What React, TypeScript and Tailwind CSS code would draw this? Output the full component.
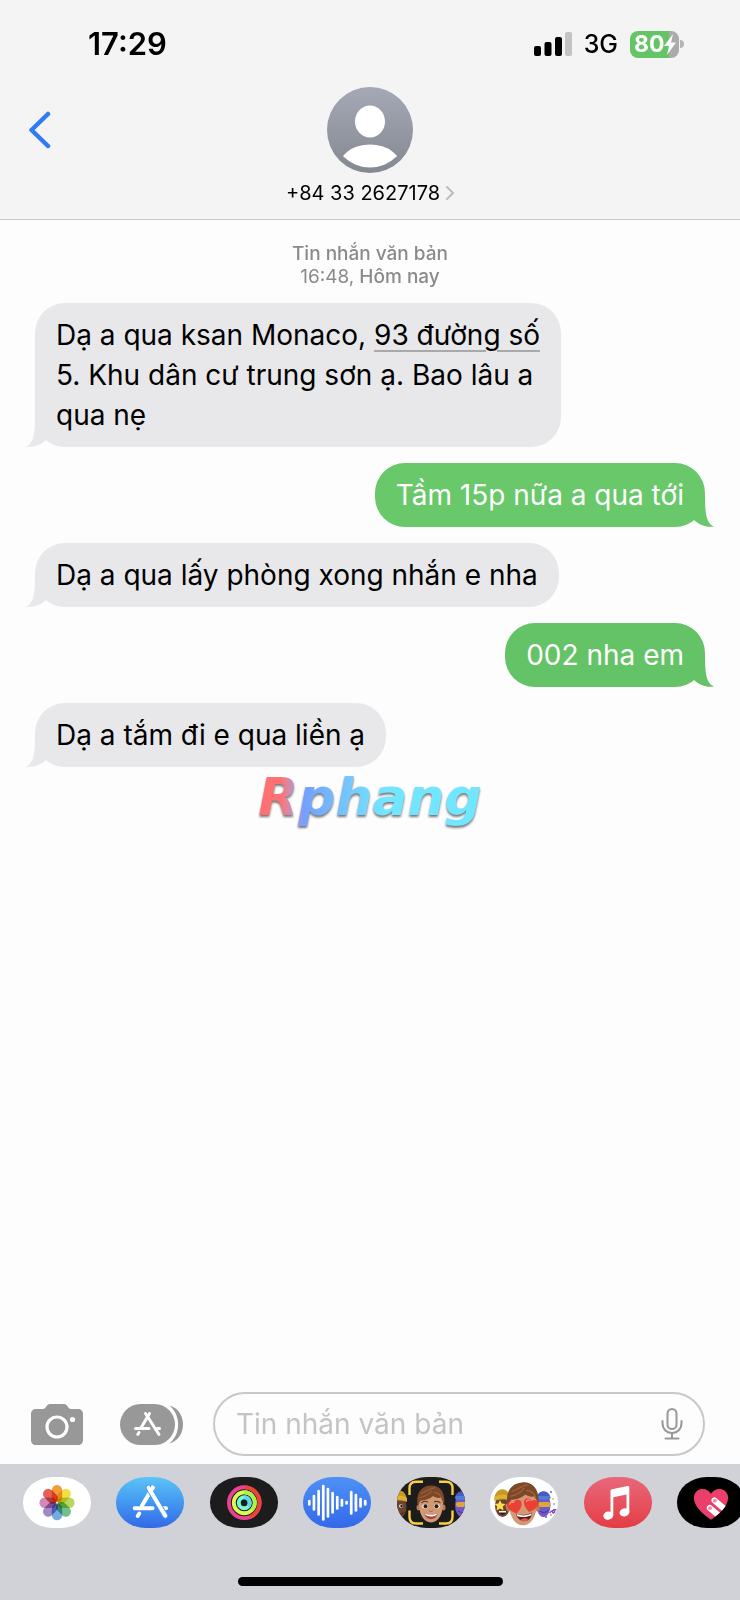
import { useState } from "react";
import type { ReactNode } from "react";

type Message = {
  id: number;
  mine: boolean;
  body: ReactNode;
  color?: string;
};

const messages: Message[] = [
  {
    id: 1,
    mine: false,
    body: (
      <>
        Dạ a qua ksan Monaco,{" "}
        <a
          href="#map"
          className="underline decoration-[#a9a9ab] decoration-2 underline-offset-[5px]"
        >
          93 đường số
        </a>
        <br />
        5. Khu dân cư trung sơn ạ. Bao lâu a
        <br />
        qua nẹ
      </>
    ),
  },
  { id: 2, mine: true, body: "Tầm 15p nữa a qua tới", color: "text-[#68c86a]" },
  { id: 3, mine: false, body: "Dạ a qua lấy phòng xong nhắn e nha" },
  { id: 4, mine: true, body: "002 nha em", color: "text-[#64c366]" },
  { id: 5, mine: false, body: "Dạ a tắm đi e qua liền ạ" },
];

const petals = [
  "#f0982f",
  "#f3dc3c",
  "#b5d555",
  "#6cbd86",
  "#6ea8dc",
  "#9a83c4",
  "#cc84b4",
  "#e35a4c",
];

const waves = [3, 8, 13, 18, 15, 11, 7, 4, 2, 12, 9, 5, 3];

const heart =
  "M0 -6 C-2 -9.500 -8 -10.500 -10.200 -5.500 C-12 0 -6 6 0 10 C6 6 12 0 10.200 -5.500 C8 -10.500 2 -9.500 0 -6Z";

const Tail = ({ mine }: { mine: boolean }) => (
  <svg
    className={`absolute bottom-0 h-8 w-5 ${
      mine ? "-right-[9px] -scale-x-100" : "-left-[9px]"
    }`}
    viewBox="0 0 20 32"
    aria-hidden="true"
  >
    <path
      d="M9 0C9 18 8 28 0 31.500C8 33 16 29 20 25V0Z"
      fill="currentColor"
    />
  </svg>
);

const Bubble = ({ message }: { message: Message }) => {
  const { mine, body, color } = message;

  return (
    <li
      className={`relative max-w-[84%] ${
        mine ? `self-end ${color}` : "self-start text-[#e8e8ea]"
      }`}
    >
      <Tail mine={mine} />
      <div className="relative rounded-[30px] bg-current px-[21px] py-3">
        <p
          className={`text-[28px] leading-[40px] ${
            mine ? "text-white" : "text-black"
          }`}
        >
          {body}
        </p>
      </div>
    </li>
  );
};

const StatusBar = () => (
  <div className="flex h-10 items-center justify-between pr-14 pl-[88px]">
    <time className="text-[31px] leading-10 font-semibold">17:29</time>
    <div className="flex items-center gap-3">
      <svg className="h-6 w-[38px]" viewBox="0 0 38 24" aria-label="Signal">
        <rect x="0" y="14" width="7" height="10" rx="2" />
        <rect x="10.500" y="10" width="7" height="14" rx="2" />
        <rect x="21" y="5" width="7" height="19" rx="2" />
        <rect x="31" y="0" width="7" height="24" rx="2" fill="#c3c3c3" />
      </svg>
      <span className="text-[25px] leading-10 font-medium">3G</span>
      <div className="flex items-center gap-px">
        <div className="flex h-[27px] w-[49px] items-center rounded-lg bg-linear-to-r from-[#64c466] from-80% to-[#ababab] to-80% pl-1">
          <span className="text-[23px] leading-[27px] font-bold text-white">
            80
          </span>
          <svg className="h-[21px] w-3" viewBox="0 0 12 21" aria-hidden="true">
            <path d="M9 0L0 12H5L3 21L12 8.500H7Z" fill="#fff" />
          </svg>
        </div>
        <span className="h-2 w-1 rounded-r-full bg-[#b4b4b4]" />
      </div>
    </div>
  </div>
);

const Avatar = () => (
  <svg className="size-[86px]" viewBox="0 0 86 86" aria-hidden="true">
    <defs>
      <linearGradient id="avatar" x1="0" y1="0" x2="0" y2="1">
        <stop offset="0" stopColor="#a5a9b6" />
        <stop offset="1" stopColor="#848891" />
      </linearGradient>
      <clipPath id="avatarInner">
        <circle cx="43" cy="43" r="37.500" />
      </clipPath>
    </defs>
    <circle cx="43" cy="43" r="43" fill="url(#avatar)" />
    <ellipse cx="43" cy="34.500" rx="15" ry="16" fill="#fff" />
    <ellipse
      cx="43"
      cy="82"
      rx="32"
      ry="24.500"
      fill="#fff"
      clipPath="url(#avatarInner)"
    />
  </svg>
);

const Header = () => (
  <header className="border-b border-[#c9c9c9] bg-[#f4f4f4] pt-6 pb-[14px]">
    <StatusBar />
    <div className="mt-[23px] grid grid-cols-[1fr_auto_1fr] items-start">
      <button
        type="button"
        aria-label="Back"
        className="flex h-[86px] items-center pl-7"
      >
        <svg
          className="h-[38px] w-6"
          viewBox="0 0 24 38"
          fill="none"
          stroke="#2f7bf6"
          strokeWidth="4.500"
          strokeLinecap="round"
          strokeLinejoin="round"
        >
          <path d="M20 3L3.500 19L20 35" />
        </svg>
      </button>
      <button type="button" className="flex flex-col items-center gap-2">
        <Avatar />
        <span className="flex items-center gap-[6px] text-[20px] leading-6">
          +84 33 2627178
          <svg
            className="h-[14px] w-2"
            viewBox="0 0 8 14"
            fill="none"
            stroke="#bdbdbf"
            strokeWidth="2"
            strokeLinecap="round"
          >
            <path d="M1 1L7 7L1 13" />
          </svg>
        </span>
      </button>
    </div>
  </header>
);

const CameraIcon = () => (
  <svg className="h-[41px] w-[52px]" viewBox="0 0 52 41" aria-hidden="true">
    <path
      d="M5 5H12C15 5 15.500 0 19 0H33C36.500 0 37 5 40 5H47C50 5 52 7 52 10V36C52 39 50 41 47 41H5C2 41 0 39 0 36V10C0 7 2 5 5 5Z"
      fill="#989898"
    />
    <circle
      cx="26"
      cy="23"
      r="10"
      fill="none"
      stroke="#fff"
      strokeWidth="3.200"
    />
    <circle cx="41.500" cy="15.500" r="2.600" fill="#fff" />
  </svg>
);

const AppsIcon = () => (
  <svg className="h-[41px] w-[64px]" viewBox="0 0 64 41" aria-hidden="true">
    <rect width="55" height="41" rx="20.500" fill="#989898" />
    <path
      d="M49.500 1.500C67 6 68 34 49.500 39.500C61 30 61 11 49.500 1.500Z"
      fill="#989898"
    />
    <g stroke="#fff" strokeWidth="3" strokeLinecap="round">
      <path d="M29.500 9.500L21.500 23" />
      <path d="M25.500 9.500L39 30.500" />
      <path d="M15.500 24.500H29M37 24.500H39.500" />
      <path d="M19 28.500L17.800 30.300" />
    </g>
  </svg>
);

const MicIcon = () => (
  <svg
    className="h-8 w-[22px]"
    viewBox="0 0 22 32"
    fill="none"
    stroke="#989898"
    strokeWidth="2"
    strokeLinecap="round"
    aria-hidden="true"
  >
    <rect x="6.500" y="1" width="9" height="20" rx="4.500" />
    <path d="M1.500 13V15C1.500 21 5.500 25 11 25C16.500 25 20.500 21 20.500 15V13" />
    <path d="M11 25V30.500M4.500 30.500H17.500" />
  </svg>
);

const PhotosArt = () => (
  <g transform="translate(34 25.700)">
    {petals.map((fill, i) => (
      <rect
        key={fill}
        x="-5.200"
        y="-17.600"
        width="10.400"
        height="16.800"
        rx="5.200"
        fill={fill}
        fillOpacity="0.95"
        transform={`rotate(${i * 45})`}
        className="mix-blend-multiply"
      />
    ))}
  </g>
);

const StoreArt = () => (
  <g stroke="#fff" strokeWidth="4" strokeLinecap="round">
    <path d="M36.700 10.700L26 28.500" />
    <path d="M18.700 31.200H36.500M46 31.200H50" />
    <path d="M23.300 36.500L21.700 39" />
    <path d="M32.500 10.700L49.300 38.700" stroke="#459bf0" strokeWidth="6" />
    <path d="M36.700 10.700L34.500 14.500" />
    <path d="M32.500 10.700L49.300 38.700" />
  </g>
);

const FitnessArt = () => (
  <g fill="none" strokeWidth="3.900">
    <circle cx="34.300" cy="25.700" r="15.400" stroke="#ea4292" />
    <path d="M35.500 10.400A15.400 15.400 0 0 1 40 40" stroke="#eb4334" />
    <circle cx="34.300" cy="25.700" r="10.500" stroke="#d9fb4f" />
    <path d="M34.300 15.200A10.500 10.500 0 0 1 42 32.800" stroke="#a8f449" />
    <circle cx="34.300" cy="25.700" r="5.500" stroke="#75f7d6" />
    <path d="M34.300 20.200A5.500 5.500 0 0 1 38 29.500" stroke="#5fd5f2" />
  </g>
);

const VoiceArt = () => (
  <g stroke="#fff" strokeWidth="2.700" strokeLinecap="round">
    {waves.map((h, i) => (
      <path
        key={i}
        d={`M${6.300 + i * 4.660} ${27 - h}V${24.400 + h}`}
      />
    ))}
  </g>
);

const BeanieFace = ({ star }: { star?: boolean }) => (
  <g>
    <ellipse cx="0" cy="5" rx="7.500" ry="11" fill="#6d4430" />
    <path d="M-8 0C-9 -15 8 -16 8 0C4 -2 -4 -2 -8 0Z" fill="#c79a22" />
    <path d="M-8 0C-4 -3 4 -3 8 0V-4C4 -7 -4 -7 -8 -4Z" fill="#dcb033" />
    {star ? (
      <>
        <path
          d="M-2.500 -1L-0.800 2.500L3 3L0.300 5.600L1 9.500L-2.500 7.600L-6 9.500L-5.300 5.600L-8 3L-4.200 2.500Z"
          fill="#fbdc4a"
        />
        <path d="M6 0L7 3L9 4L7 6L6 9L3 5Z" fill="#e8b93a" />
        <path d="M-4 10H4C3 15 -3 15 -4 10Z" fill="#361915" />
        <path d="M-3.500 10H3.500V11.500H-3.500Z" fill="#fff" />
      </>
    ) : (
      <>
        <ellipse cx="2" cy="4" rx="2" ry="1.700" fill="#e9e2dc" />
        <circle cx="2.500" cy="4" r="1.200" fill="#21130c" />
        <path d="M-2 11C1 13 4 12 5 10" stroke="#3a1e14" fill="none" />
      </>
    )}
  </g>
);

const PurpleFace = () => (
  <g>
    <ellipse cx="0" cy="2" rx="7" ry="12" fill="#7257c9" />
    <path d="M-7 -5C-6 -14 6 -14 7 -5Z" fill="#4a5bc0" />
    <rect x="-7" y="-7" width="14" height="3.500" rx="1.700" fill="#4c80d8" />
    <rect x="-6" y="-1" width="13" height="5" rx="2" fill="#dba63c" />
    <path d="M-4 8C-1 10 3 10 5 7" stroke="#45309b" fill="none" />
  </g>
);

const BoyFace = ({ inLove }: { inLove?: boolean }) => (
  <g>
    <ellipse cx="-12.500" cy="4" rx="2" ry="3" fill="#b97a58" />
    <ellipse cx="12.500" cy="4" rx="2" ry="3" fill="#b97a58" />
    <path
      d="M-12 -2C-12 -12 12 -12 12 -2C12.500 9 8 19 0 19C-8 19 -12.500 9 -12 -2Z"
      fill="#d19a74"
    />
    <path
      d="M-13.500 3C-15 -8 -12 -17 -1 -18C9 -19 15 -11 13 2C12 0 12 -3 10 -6C7 -5 4 -6 2 -7.500C-2 -4 -7 -3 -10 -3C-12 -1 -12 1 -13.500 3Z"
      fill="#7d4828"
    />
    <path
      d="M-11 -6C-6 -7 -1 -10 1 -13M-10 -10C-5 -12 -1 -15 4 -16M3 -11C7 -11 10 -8 11 -4"
      stroke="#9c6138"
      strokeWidth="1.200"
      fill="none"
    />
    {inLove ? (
      <>
        <path
          d="M-6 9C-2 10.500 4 10.500 7.500 8C8 17 -4 18 -6 9Z"
          fill="#5c1a1a"
        />
        <path
          d="M-5.500 9.300C-2 11 4 10.800 7.200 8.600V10.300C4 12 -2 12.300 -5 11Z"
          fill="#fff"
        />
        <path
          d="M-2.500 14.500C0 12.500 3 12.500 4.500 14C2 16.200 -1 16.200 -2.500 14.500Z"
          fill="#dc5953"
        />
        <path
          d={heart}
          fill="#ec4034"
          transform="translate(-6.900 3) rotate(-14) scale(.6)"
        />
        <path
          d={heart}
          fill="#ec4034"
          transform="translate(6.600 1.700) rotate(14) scale(.6)"
        />
        <path
          d="M-11.500 1C-11 -1 -9.500 -1.500 -8.500 -0.800M3 -1.500C3.500 -3 5 -3.500 6 -2.500"
          stroke="#ff9185"
          strokeWidth="1.100"
          strokeLinecap="round"
          fill="none"
        />
      </>
    ) : (
      <>
        <path
          d="M-9.500 -0.500C-7.500 -2.500 -5 -2.500 -3 -1.500M3 -1.500C5 -2.500 7.500 -2.500 9.500 -0.500"
          stroke="#5b3019"
          strokeWidth="1.100"
          fill="none"
        />
        <ellipse cx="-5.800" cy="2.800" rx="2.900" ry="2.100" fill="#fff" />
        <ellipse cx="5.800" cy="2.800" rx="2.900" ry="2.100" fill="#fff" />
        <circle cx="-5.500" cy="2.700" r="2" fill="#2c1a10" />
        <circle cx="5.500" cy="2.700" r="2" fill="#2c1a10" />
        <path d="M-2 7C-1 8.500 1 8.500 2 7" stroke="#b26f4e" fill="none" />
        <path
          d="M-6.500 10C-2 11.500 2 11.500 6.500 10C5.500 17.500 -5.500 17.500 -6.500 10Z"
          fill="#a9423c"
        />
        <path
          d="M-6 10.300C-2 11.600 2 11.600 6 10.300C5.500 14 -5.500 14 -6 10.300Z"
          fill="#fff"
        />
      </>
    )}
  </g>
);

const MemojiArt = () => (
  <>
    <g transform="translate(2 25)">
      <BeanieFace />
    </g>
    <g transform="translate(65 26)">
      <PurpleFace />
    </g>
    <g transform="translate(34 26.500)">
      <BoyFace />
    </g>
    <path
      d="M12.500 18V11C12.500 7 15 4.700 19 4.700H26M42 4.700H49C53 4.700 55.500 7 55.500 11V18M55.500 33.500V40C55.500 44 53 46.500 49 46.500H42M26 46.500H19C15 46.500 12.500 44 12.500 40V33.500"
      fill="none"
      stroke="#f8cf45"
      strokeWidth="2.400"
    />
  </>
);

const StickerArt = () => (
  <>
    <g transform="translate(12.500 24)">
      <BeanieFace star />
    </g>
    <g transform="translate(53.500 26)">
      <PurpleFace />
      <path
        d="M6 10C10 5 13 9 10 10C8 10 9 5 13 7"
        stroke="#7b4fc4"
        strokeWidth="1.400"
        fill="none"
      />
    </g>
    <g fill="#3f6fe8">
      <circle cx="61" cy="15" r="1" />
      <circle cx="64" cy="27" r="0.800" />
      <circle cx="56" cy="40" r="1" />
    </g>
    <circle cx="63" cy="22" r="1" fill="#f0c93c" />
    <circle cx="61" cy="38" r="0.900" fill="#ef8a3a" />
    <g transform="translate(33 26.300) scale(1.160)">
      <BoyFace inLove />
    </g>
  </>
);

const MusicArt = () => (
  <g fill="#fff">
    <path d="M26.500 14Q26.500 12.600 28 12.300L43.500 9.100Q45.300 8.800 45.300 10.500V35H42.500V17.500L29.300 20.200V38.500H26.500Z" />
    <ellipse
      cx="24.300"
      cy="38.600"
      rx="5"
      ry="4.100"
      transform="rotate(-14 24.300 38.600)"
    />
    <ellipse
      cx="40.500"
      cy="35.300"
      rx="5"
      ry="4"
      transform="rotate(-14 40.500 35.300)"
    />
  </g>
);

const TouchArt = () => (
  <>
    <defs>
      <clipPath id="touchHeart">
        <path d={heart} transform="translate(34 26.500) scale(1.620)" />
      </clipPath>
    </defs>
    <g clipPath="url(#touchHeart)">
      <rect width="68" height="51" fill="#ea3f6b" />
      <g stroke="#fff" strokeWidth="6" strokeLinecap="round">
        <path d="M32.800 31L47 43" />
        <path d="M37.500 23.500L54 37.500" />
      </g>
      <circle cx="33" cy="31.200" r="1.900" fill="#f58aa5" />
      <circle cx="37.800" cy="23.700" r="1.900" fill="#f58aa5" />
    </g>
  </>
);

const apps = [
  { name: "Photos", bg: "bg-white", art: <PhotosArt /> },
  {
    name: "App Store",
    bg: "bg-linear-to-b from-[#5cc4f6] to-[#3368e8]",
    art: <StoreArt />,
  },
  { name: "Fitness", bg: "bg-[#1c1c1c]", art: <FitnessArt /> },
  {
    name: "Audio",
    bg: "bg-linear-to-b from-[#4f90f5] to-[#3469ea]",
    art: <VoiceArt />,
  },
  { name: "Memoji", bg: "bg-[#1c1c1c]", art: <MemojiArt /> },
  { name: "Stickers", bg: "bg-white", art: <StickerArt /> },
  {
    name: "Music",
    bg: "bg-linear-to-b from-[#e8677a] to-[#e43b44]",
    art: <MusicArt />,
  },
  { name: "Digital Touch", bg: "bg-black", art: <TouchArt /> },
];

const AppDrawer = () => (
  <nav className="overflow-hidden bg-[#d1d2d8] pt-[13px] pb-[14px]">
    <div className="-mr-[5px] flex justify-between pl-[23px]">
      {apps.map((app) => (
        <button
          key={app.name}
          type="button"
          aria-label={app.name}
          className={`h-[51px] w-[68px] shrink-0 overflow-hidden rounded-[30px/25px] ${app.bg}`}
        >
          <svg className="h-[51px] w-[68px]" viewBox="0 0 68 51" fill="none">
            {app.art}
          </svg>
        </button>
      ))}
    </div>
    <div className="mx-auto mt-[49px] h-[9px] w-[265px] rounded-full bg-black" />
  </nav>
);

const App = () => {
  const [text, setText] = useState("");

  return (
    <div className="flex min-h-screen flex-col bg-[#fdfdfd] font-['Inter','Noto_Sans',sans-serif] text-black">
      <Header />

      <main className="flex flex-1 flex-col pt-[22px]">
        <p className="text-center text-[19px] leading-[23px] font-medium text-[#8a8a8d]">
          Tin nhắn văn bản
          <br />
          <span className="font-normal">16:48,</span> Hôm nay
        </p>
        <ul className="mt-[15px] flex flex-col gap-4 px-[35px]">
          {messages.map((message) => (
            <Bubble key={message.id} message={message} />
          ))}
        </ul>
        <div className="pl-1 text-center font-['DejaVu_Sans',sans-serif] text-[52px] leading-[60px] font-bold italic drop-shadow-[0_2px_1px_rgba(60,60,60,0.7)]">
          <span className="bg-linear-to-r from-[#ff7072] from-10% via-[#759fff] via-20% to-[#72e5ff] to-55% bg-clip-text pr-1 text-transparent">
            Rphang
          </span>
        </div>
      </main>

      <form
        className="flex items-center pr-[35px] pb-2 pl-[31px]"
        onSubmit={(e) => e.preventDefault()}
      >
        <button type="button" aria-label="Camera">
          <CameraIcon />
        </button>
        <button type="button" aria-label="Apps" className="ml-[37px]">
          <AppsIcon />
        </button>
        <div className="ml-[29px] flex h-16 min-w-0 flex-1 items-center rounded-full border-2 border-[#c8c8c8] pr-5 pl-[21px]">
          <input
            type="text"
            aria-label="Tin nhắn văn bản"
            placeholder="Tin nhắn văn bản"
            value={text}
            onChange={(e) => setText(e.target.value)}
            className="min-w-0 flex-1 bg-transparent text-[28px] leading-10 outline-none placeholder:text-[#c4c4c6]"
          />
          <button type="button" aria-label="Dictate">
            <MicIcon />
          </button>
        </div>
      </form>

      <AppDrawer />
    </div>
  );
};

export default App;
